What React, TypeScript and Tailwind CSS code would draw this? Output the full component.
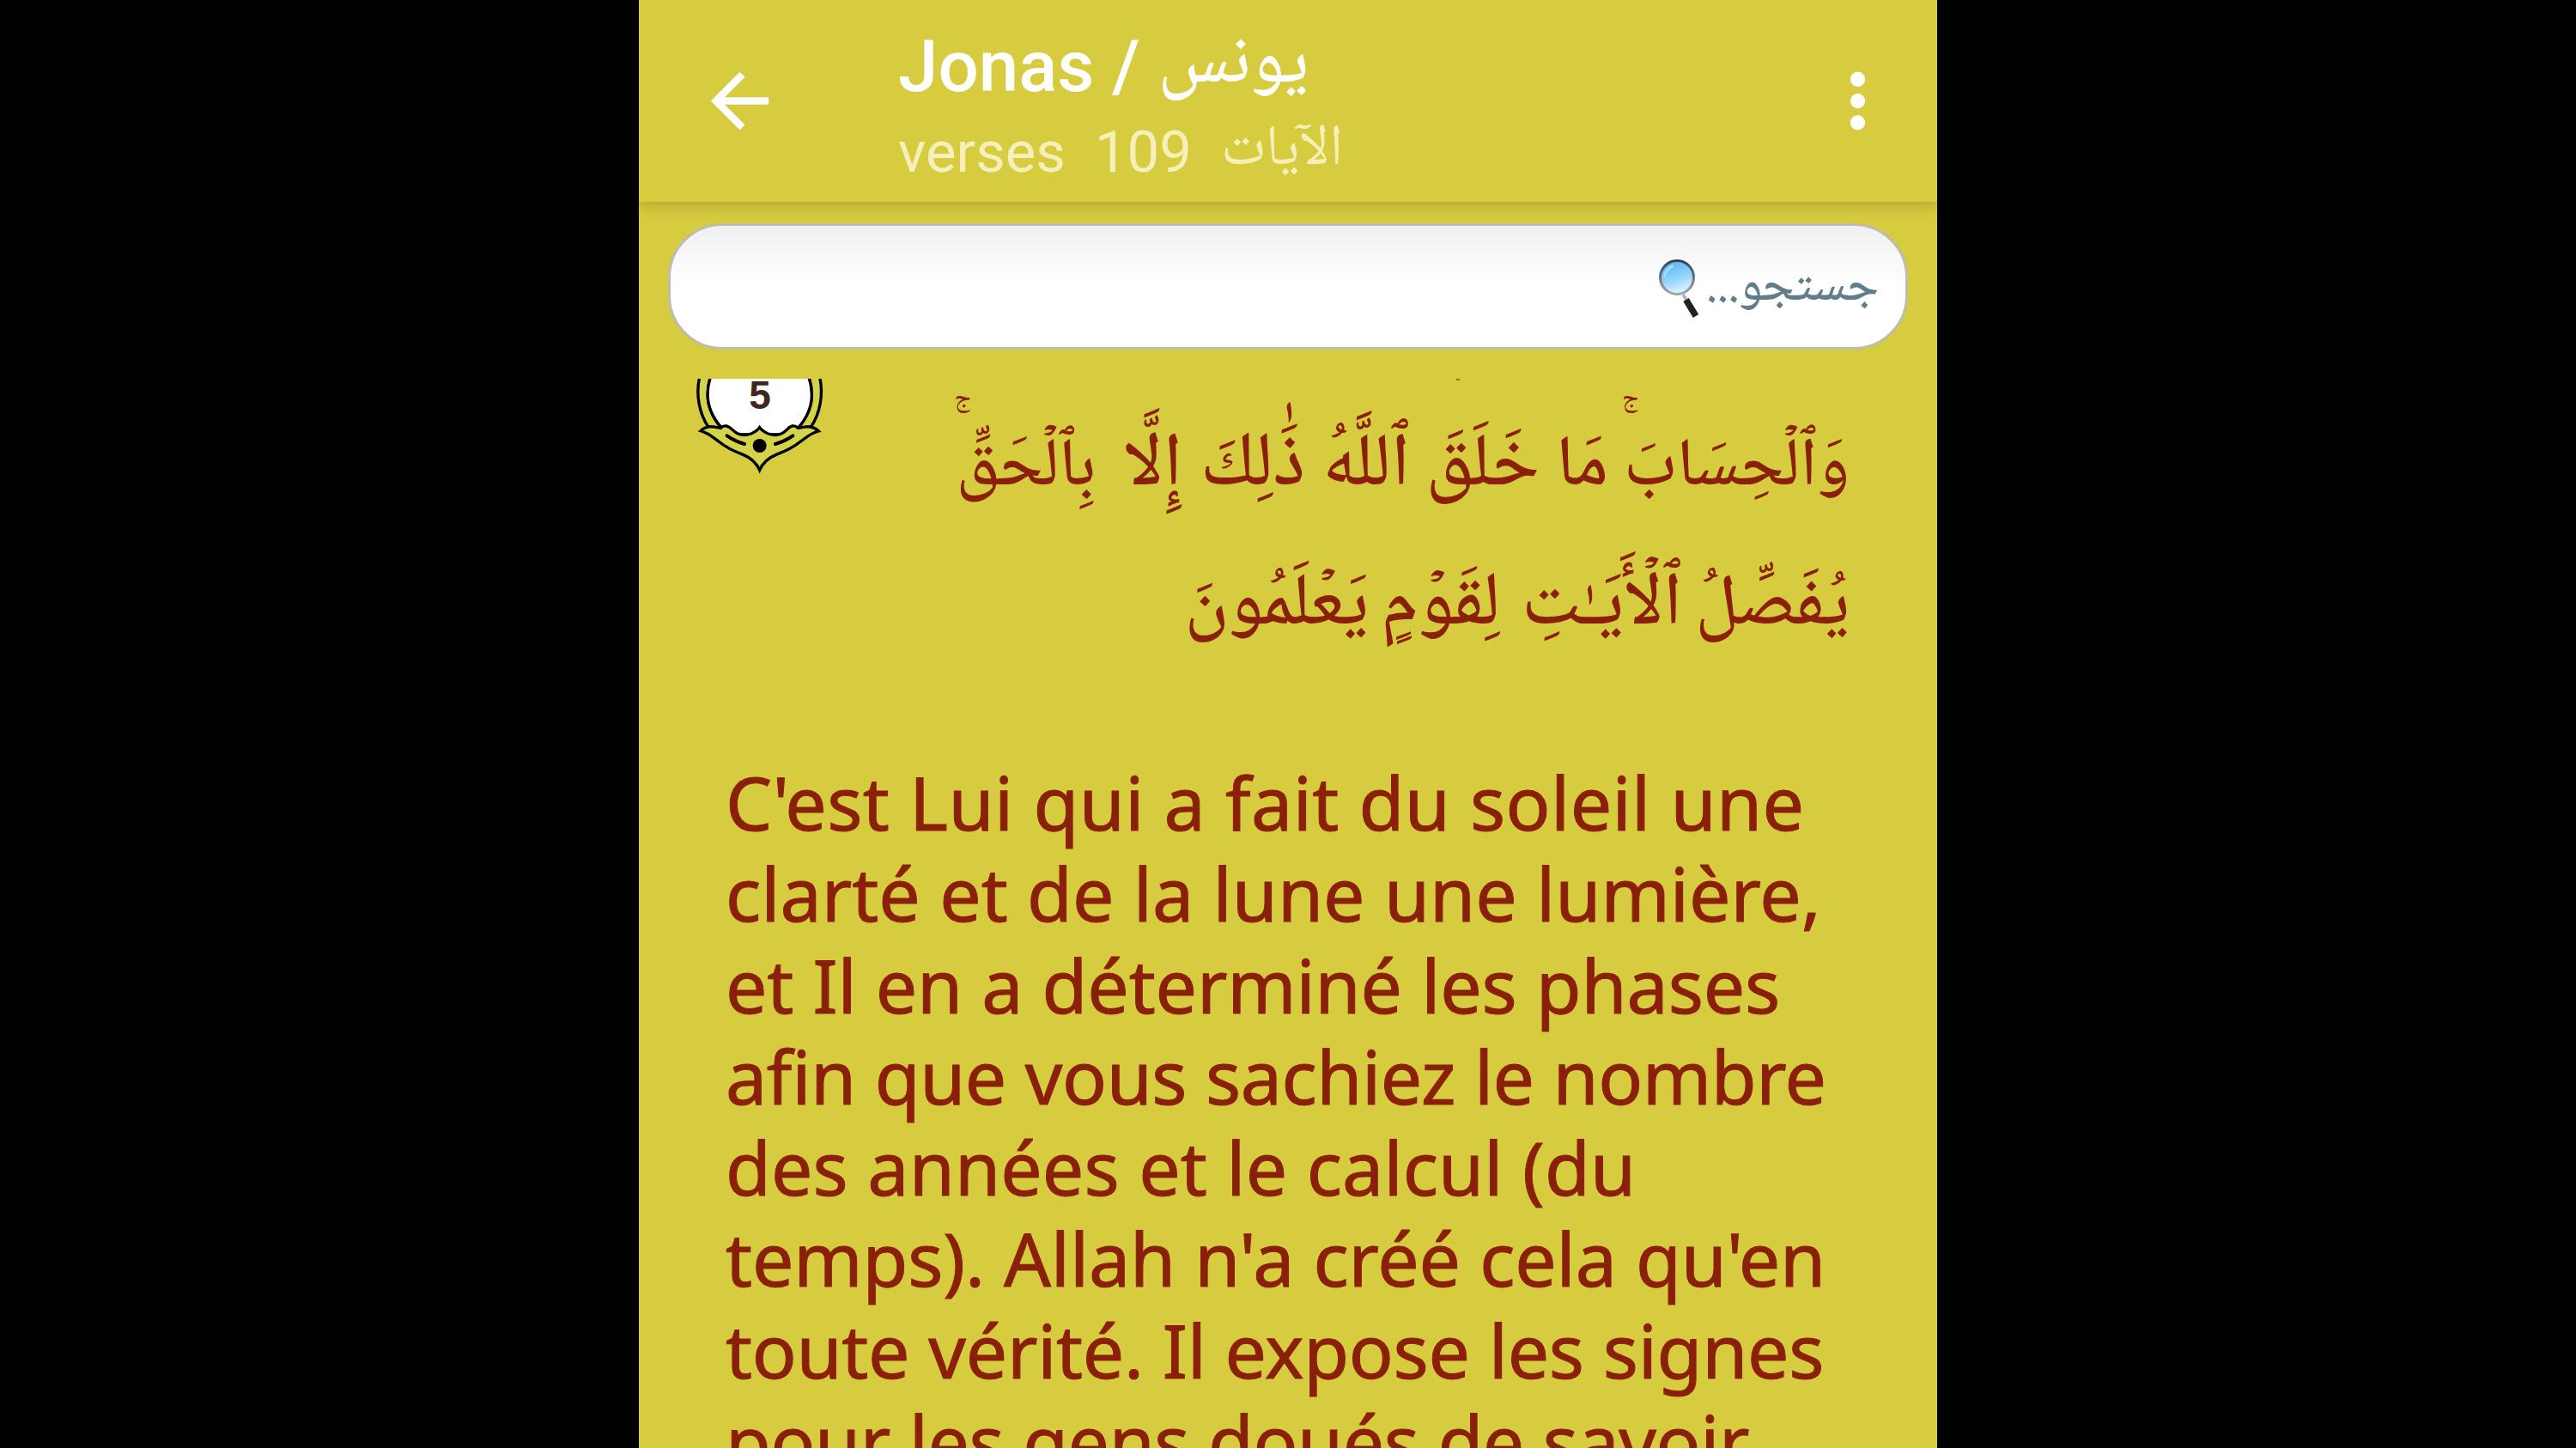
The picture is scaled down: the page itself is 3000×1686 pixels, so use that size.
import React from 'react'

const verse = [
  [
    { word: 'وَٱلۡحِسَابَۚ', style: 'w-[281px] text-[79px]' },
    { word: 'مَا', style: 'w-[80px]' },
    { word: 'خَلَقَ', style: 'w-[151px] text-[87px]' },
    { word: 'ٱللَّهُ', style: 'w-[122px] text-[87px]' },
    { word: 'ذَٰلِكَ', style: 'w-[143px] text-[89px]' },
    { word: 'إِلَّا', style: 'w-[101px] text-[88px]' },
    { word: 'بِٱلۡحَقّ͏ِۚ', style: 'w-[156px] text-[79px]' },
  ],
  [
    { word: 'يُفَصّ͏ِلُ', style: 'w-[195px]' },
    { word: 'ٱلۡأَيَـٰتِ', style: 'w-[212px] text-[87px]' },
    { word: 'لِقَوۡمٍ', style: 'w-[153px] text-[88px]' },
    { word: 'يَعۡلَمُونَ', style: 'w-[208px] text-[86px]' },
  ],
]

const translation = [
  { text: "C'est Lui qui a fait du soleil une", tracking: 'tracking-[0.4px]' },
  { text: 'clarté et de la lune une lumière,', tracking: 'tracking-[0px]' },
  { text: 'et Il en a déterminé les phases', tracking: 'tracking-[-0.15px]' },
  { text: 'aﬁn que vous sachiez le nombre', tracking: 'tracking-[-0.45px]' },
  { text: 'des années et le calcul (du', tracking: 'tracking-[0.1px]' },
  { text: "temps). Allah n'a créé cela qu'en", tracking: 'tracking-[-0.15px]' },
  { text: 'toute vérité. Il expose les signes', tracking: 'tracking-[-0.3px]' },
  { text: 'pour les gens doués de savoir.', tracking: 'tracking-[-0.45px]' },
]

const BackIcon = () => (
  <svg className="w-[101px] h-[101px]" viewBox="0 0 24 24" fill="currentColor" aria-hidden="true">
    <path d="M20 11H7.83l5.59-5.59L12 4l-8 8 8 8 1.41-1.41L7.83 13H20v-2z" />
  </svg>
)

const MoreIcon = () => (
  <svg className="w-[101px] h-[101px]" viewBox="0 0 24 24" fill="currentColor" aria-hidden="true">
    <circle cx="12" cy="6" r="2.05" />
    <circle cx="12" cy="12" r="2.05" />
    <circle cx="12" cy="18" r="2.05" />
  </svg>
)

const MagnifierIcon = () => (
  <svg className="mt-1 w-[50px] h-[70px]" viewBox="0 0 50 70" aria-hidden="true">
    <defs>
      <linearGradient id="lens" x1="0.3" y1="0" x2="0.6" y2="1">
        <stop offset="0" stopColor="#58b4f8" />
        <stop offset="0.55" stopColor="#93d5fd" />
        <stop offset="1" stopColor="#eaf8ff" />
      </linearGradient>
      <linearGradient id="rim" x1="0" y1="0" x2="0" y2="1">
        <stop offset="0" stopColor="#33414d" />
        <stop offset="1" stopColor="#a3a6a9" />
      </linearGradient>
    </defs>
    <path d="M29 42l4 6" stroke="#b5b5b5" strokeWidth="4" />
    <path d="M32.5 48L44 67" stroke="#1f2222" strokeWidth="7.5" />
    <circle cx="22" cy="22" r="19.5" fill="url(#lens)" stroke="url(#rim)" strokeWidth="3" />
    <path d="M8 20a14 14 0 0 1 9-11" fill="none" stroke="#a5dcff" strokeWidth="3" strokeLinecap="round" />
  </svg>
)

// Lower part of the verse medallion, the top is scrolled under the search bar
const VerseBadge = () => (
  <svg className="w-[150px] h-[111px]" viewBox="90 123 450 333" fill="none" stroke="#000" strokeWidth="10" aria-hidden="true">
    <path
      d="M104 118C90 180 104 245 134 290L180 295C130 235 124 180 142 118ZM524 118C538 180 524 245 494 290L448 295C498 235 506 180 486 118Z"
      fill="#d3d44a"
    />
    <path d="M142 118C122 180 132 240 182 295L240 318H390L448 295C498 240 506 180 486 118Z" fill="#fff" />
    <path
      d="M108 305C130 285 150 290 178 295C190 282 205 287 220 302C238 320 262 323 284 315C300 308 308 302 314 293C320 302 330 309 344 315C366 323 390 320 408 302C421 287 435 282 448 295C478 290 498 285 520 306C495 312 480 325 460 340C430 365 400 378 372 388C342 400 326 415 314 442C302 415 286 400 256 388C228 378 198 365 168 340C148 325 133 312 108 305Z"
      fill="#d3d44a"
    />
    <path d="M200 322Q230 343 261 351M430 322Q400 343 369 351" strokeWidth="12" strokeLinecap="round" />
    <circle cx="314" cy="357" r="24" fill="#000" stroke="none" />
    <text
      x="315"
      y="227"
      textAnchor="middle"
      className="font-['Liberation_Sans'] font-bold text-[138px]"
      fill="#40261f"
      stroke="none"
    >
      5
    </text>
  </svg>
)

export default function App() {
  return (
    <div className="flex h-[1686px] w-[3000px] justify-center overflow-hidden bg-black">
      <div className="flex w-[1512px] flex-col overflow-hidden bg-[#d7cb3f]">
        <header className="flex h-[235px] flex-none items-center bg-[#d7cb3f] pl-[67px] pr-[42px] text-white shadow-[0_4px_16px_rgba(90,80,0,0.3)]">
          <button aria-label="Retour">
            <BackIcon />
          </button>
          <div className="ml-[134px] flex-1 whitespace-nowrap pt-[15px] font-['Roboto','Noto_Naskh_Arabic','Noto_Sans_Arabic',sans-serif]">
            <h1 className="flex h-[104px] items-baseline gap-[21px] text-[83.5px] font-medium leading-[100px]">
              <span>Jonas /</span>
              <span className="-translate-y-[11px] text-[83px] font-medium">يونس</span>
            </h1>
            <p className="flex h-[90px] items-baseline gap-[34px] text-[67px] leading-[90px] text-[#f5efb9]">
              <span>verses</span>
              <span>109</span>
              <span className="-translate-y-[9px] text-[67px]">الآيات</span>
            </p>
          </div>
          <button aria-label="Menu">
            <MoreIcon />
          </button>
        </header>

        <div className="mx-[34px] mt-[25px] flex h-[147px] flex-none items-center justify-end rounded-[63px] border-[3px] border-[#bdbdaf] bg-linear-to-b from-[#f0f0f0] to-white to-50% pr-[31px]">
          <MagnifierIcon />
          <span
            dir="rtl"
            className="ml-1.5 pt-1.5 font-['Noto_Naskh_Arabic','DejaVu_Sans',sans-serif] text-[58px] font-medium leading-[100px] text-[#607d8b]"
          >
            جستجو...
          </span>
        </div>

        <main className="relative mt-[34px] flex-1 overflow-hidden text-[#8a1f0a]">
          {/* Tip of a vowel mark from the line scrolled out above */}
          <span className="absolute left-[952px] top-0 h-0.5 w-1 bg-[#a5651c]" />
          <div className="flex h-[440px] items-start justify-between pl-[66px] pr-[102px]">
            <VerseBadge />
            <div
              dir="rtl"
              className="mt-[23px] font-['Noto_Naskh_Arabic','DejaVu_Sans',serif] text-[84px] font-medium leading-[162px]"
            >
              {verse.map((row, i) => (
                <p key={i} className="flex h-[162px] items-baseline whitespace-nowrap">
                  {row.map(({ word, style }) => (
                    <span key={word} className={style}>
                      {word}{' '}
                    </span>
                  ))}
                </p>
              ))}
            </div>
          </div>
          <div className="pl-[101px] font-['Noto_Sans',sans-serif] text-[86px] leading-[106.3px] [-webkit-text-stroke:1px_#8a1f0a]">
            {translation.map(({ text, tracking }) => (
              <p key={text} className="whitespace-nowrap">
                <span className={tracking}>{text}</span>
              </p>
            ))}
          </div>
        </main>
      </div>
    </div>
  )
}
